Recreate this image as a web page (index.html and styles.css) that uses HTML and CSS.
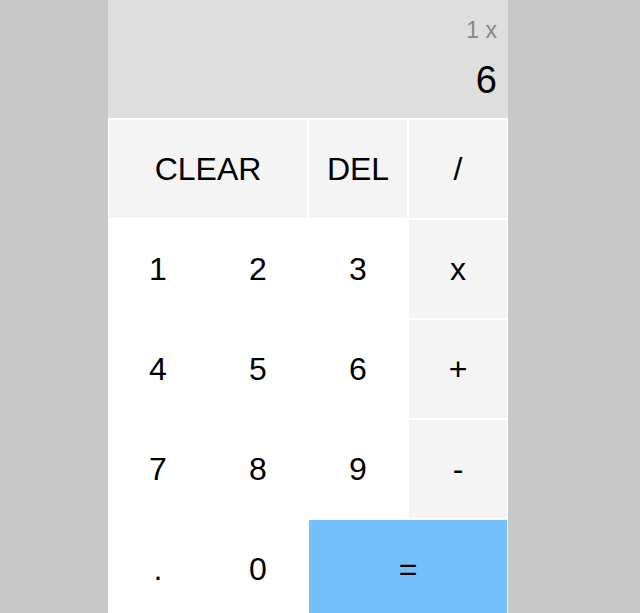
FILE: index.html
```html
<!DOCTYPE html>
<html lang="en">
<head>
<meta charset="utf-8">
<title>Calculator</title>
<link rel="stylesheet" href="styles.css">
</head>
<body>
<div class="calc">
  <div class="display">
    <div class="prev">1 x</div>
    <div class="curr">6</div>
  </div>
  <div class="keypad">
    <button class="key op span2">CLEAR</button>
    <button class="key op">DEL</button>
    <button class="key op">/</button>
    <button class="key">1</button>
    <button class="key">2</button>
    <button class="key">3</button>
    <button class="key op">x</button>
    <button class="key">4</button>
    <button class="key">5</button>
    <button class="key">6</button>
    <button class="key op">+</button>
    <button class="key">7</button>
    <button class="key">8</button>
    <button class="key">9</button>
    <button class="key op">-</button>
    <button class="key">.</button>
    <button class="key">0</button>
    <button class="key eq span2">=</button>
  </div>
</div>
</body>
</html>
```
FILE: styles.css
```css
html, body {
  margin: 0;
  padding: 0;
  overflow: hidden;
}
body {
  background: #c8c8c8;
  font-family: "Liberation Sans", Arial, sans-serif;
}
.calc {
  width: 400px;
  margin-left: 108px;
}
.display {
  height: 118px;
  box-sizing: border-box;
  background: #dedede;
  padding: 19px 11px 0 0;
  text-align: right;
}
.prev {
  font-size: 23px;
  line-height: 23px;
  color: #888888;
}
.curr {
  margin-top: 19px;
  font-size: 38px;
  line-height: 38px;
  color: #000;
}
.keypad {
  display: grid;
  grid-template-columns: repeat(4, 98px);
  grid-auto-rows: 98px;
  gap: 2px;
  padding: 2px 1px 1px 1px;
  background: #fff;
}
.key {
  border: none;
  margin: 0;
  padding: 0;
  background: #fff;
  font-family: "Liberation Sans", Arial, sans-serif;
  font-size: 32px;
  color: #000;
  display: flex;
  align-items: center;
  justify-content: center;
}
.op {
  background: #f4f4f4;
}
.eq {
  background: #74c0fc;
}
.span2 {
  grid-column: span 2;
}
```
